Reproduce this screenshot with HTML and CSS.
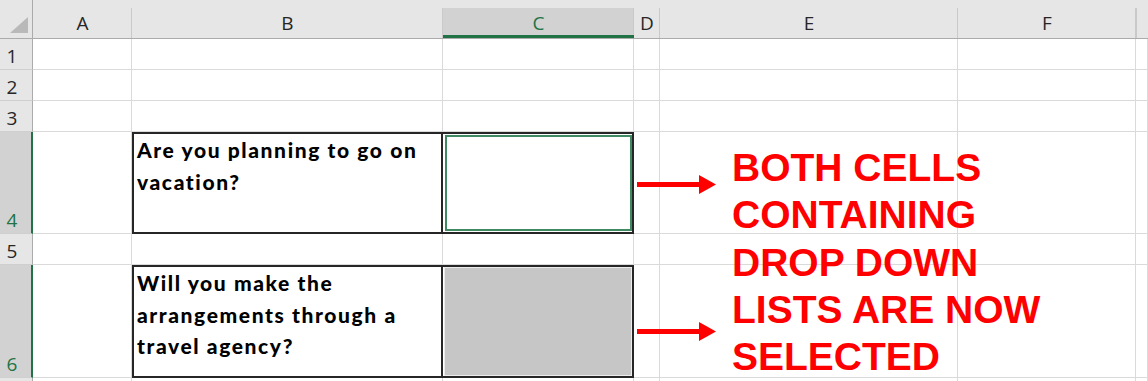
FILE: index.html
```html
<!DOCTYPE html>
<html>
<head>
<meta charset="utf-8">
<link rel="stylesheet" href="styles.css">
</head>
<body>
<div class="sheet">
  <div class="grid">
    <div class="corner"><svg class="corner-tri" width="18" height="16" viewBox="0 0 18 16"><polygon points="0,16 18,16 18,0" fill="#b9b9b9"/></svg></div>
    <div class="colhead">A</div>
    <div class="colhead">B</div>
    <div class="colhead sel">C</div>
    <div class="colhead">D</div>
    <div class="colhead">E</div>
    <div class="colhead">F</div>
    <div class="colhead last"></div>

    <div class="rowhead">1</div>
    <div class="cell"></div><div class="cell"></div><div class="cell"></div><div class="cell"></div><div class="cell"></div><div class="cell"></div><div class="cell"></div>

    <div class="rowhead">2</div>
    <div class="cell"></div><div class="cell"></div><div class="cell"></div><div class="cell"></div><div class="cell"></div><div class="cell"></div><div class="cell"></div>

    <div class="rowhead">3</div>
    <div class="cell"></div><div class="cell"></div><div class="cell"></div><div class="cell"></div><div class="cell"></div><div class="cell"></div><div class="cell"></div>

    <div class="rowhead sel">4</div>
    <div class="cell"></div>
    <div class="cell qbox"><p class="question">Are you planning to go on vacation?</p></div>
    <div class="cell abox"><div class="active"></div></div>
    <div class="cell"></div><div class="cell"></div><div class="cell"></div><div class="cell"></div>

    <div class="rowhead">5</div>
    <div class="cell"></div><div class="cell"></div><div class="cell"></div><div class="cell"></div><div class="cell"></div><div class="cell"></div><div class="cell"></div>

    <div class="rowhead sel">6</div>
    <div class="cell"></div>
    <div class="cell qbox"><p class="question">Will you make the arrangements through a travel agency?</p></div>
    <div class="cell abox"><div class="shaded"></div></div>
    <div class="cell"></div><div class="cell"></div><div class="cell"></div><div class="cell"></div>

    <div class="rowhead"></div>
    <div class="cell"></div><div class="cell"></div><div class="cell"></div><div class="cell"></div><div class="cell"></div><div class="cell"></div><div class="cell"></div>
  </div>

  <svg class="arrows" width="82" height="168" viewBox="0 0 82 168">
    <polygon points="1,8 63,8 63,1 80,10.5 63,20 63,13 1,13" fill="#ff0000"/>
    <polygon points="1,155 63,155 63,148 80,157.5 63,167 63,160 1,160" fill="#ff0000"/>
  </svg>

  <div class="note">
    <div>BOTH CELLS</div>
    <div>CONTAINING</div>
    <div>DROP DOWN</div>
    <div>LISTS ARE NOW</div>
    <div>SELECTED</div>
  </div>
</div>
</body>
</html>
```

FILE: styles.css
```css
html, body {
  margin: 0;
  padding: 0;
  background: #ffffff;
}

.sheet {
  position: relative;
  width: 1148px;
  height: 381px;
  overflow: hidden;
}

.grid {
  display: grid;
  grid-template-columns: 33px 99px 311px 191px 26px 298px 178px 1fr;
  grid-template-rows: 39px 31px 31px 31px 102px 31px 113px 31px;
  font-family: "Open Sans", "Noto Sans", sans-serif;
}

.corner {
  box-sizing: border-box;
  background: #e6e6e6;
  border-right: 1px solid #ababab;
  border-bottom: 1px solid #ababab;
}

.corner-tri {
  display: block;
  margin: 17px 0 0 10px;
}

.colhead {
  box-sizing: border-box;
  padding-top: 9px;
  border-bottom: 1px solid #ababab;
  background:
    linear-gradient(#c9c9c9, #c9c9c9) right bottom / 1px 30px no-repeat,
    #e6e6e6;
  color: #262626;
  font-size: 19px;
  line-height: 29px;
  text-align: center;
}

.colhead.sel {
  background:
    linear-gradient(#217346, #217346) left bottom / 100% 3px no-repeat,
    linear-gradient(#c9c9c9, #c9c9c9) right bottom / 1px 30px no-repeat,
    linear-gradient(#d2d2d2, #d2d2d2) left bottom / 100% 30px no-repeat,
    #e6e6e6;
  color: #217346;
}

.colhead.last {
  background:
    linear-gradient(#c9c9c9, #c9c9c9) left bottom / 1px 30px no-repeat,
    #e6e6e6;
}

.rowhead {
  box-sizing: border-box;
  display: flex;
  align-items: flex-end;
  justify-content: center;
  padding: 0 8px 0 0;
  background: #e6e6e6;
  border-right: 1px solid #ababab;
  border-bottom: 1px solid #cfcfcf;
  color: #262626;
  font-size: 19px;
  line-height: 26px;
}

.rowhead.sel {
  background: #d2d2d2;
  border-right: 2px solid #217346;
  padding-right: 7px;
  color: #217346;
}

.cell {
  box-sizing: border-box;
  border-right: 1px solid #dadada;
  border-bottom: 1px solid #dadada;
}

.qbox {
  border: 2px solid #262626;
  padding: 0 3px 0 3px;
}

.question {
  margin: 0;
  font-family: Lato, "Open Sans", sans-serif;
  font-weight: 900;
  font-size: 21px;
  letter-spacing: 1.6px;
  line-height: 31.7px;
  color: #000000;
}

.abox {
  display: flex;
  border-top: 2px solid #262626;
  border-right: 2px solid #262626;
  border-bottom: 2px solid #262626;
  border-left: 0;
  padding: 1px 0 1px 2px;
}

.active {
  flex: 1;
  border: 2px solid #3f8a62;
  background: #ffffff;
}

.abox .shaded {
  flex: 1;
  margin: -1px 0 -1px -1px;
  border: 1px solid #ececec;
  background: #c6c6c6;
}

.arrows {
  position: absolute;
  left: 636px;
  top: 174px;
}

.note {
  position: absolute;
  left: 732px;
  top: 144px;
  font-family: "Liberation Sans", Arial, sans-serif;
  font-weight: 700;
  font-size: 39px;
  line-height: 47.25px;
  color: #ff0000;
  white-space: nowrap;
}
```
